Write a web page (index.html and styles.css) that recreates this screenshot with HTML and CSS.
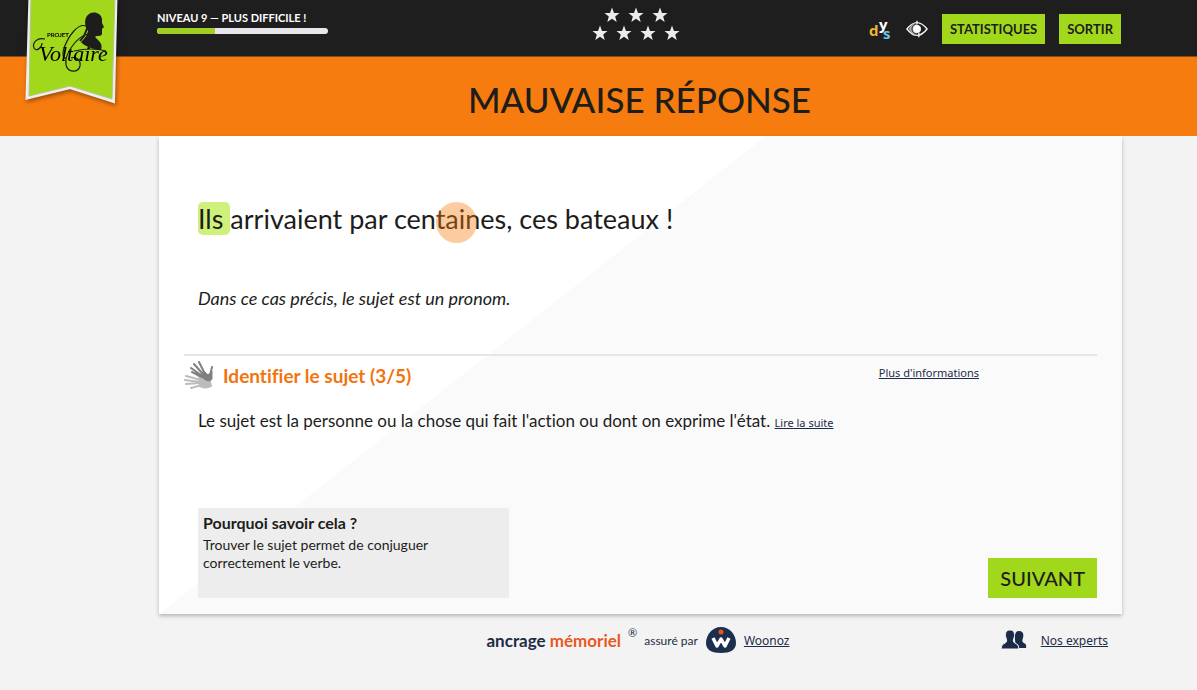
FILE: index.html
```html
<!DOCTYPE html>
<html lang="fr">
<head>
  <meta charset="UTF-8" />
  <meta name="viewport" content="width=device-width, initial-scale=1.0"/>
  <title>Projet Voltaire</title>
  <link rel="stylesheet" href="styles.css">
</head>
<body>
  <header class="top-bar">
    <a class="logo" href="#" aria-label="Projet Voltaire">
      <svg width="100" height="112" viewBox="0 0 100 112">
        <path class="ribbon-edge" d="M10 -4 L96 -4 L93.500 101.500 L50 87.500 L7 98 Z" />
        <path class="ribbon" d="M11 -4 L95 -4 L92 99 L50 86 L9 96 Z" />
        <path d="M69 14 C74 11 81 13 82 19 L82 23 L84 27 L82 29 L82 34 C81 37 77 35 75 37 L79 41 C82 44 82 47 81 50 C74 50 64 46 61 42 C64 39 67 36 68 31 C64 26 64 17 69 14 Z" fill="#1d1d1b" />
        <path d="M68 26 L64 36 L60 41 M70 32 L65 43" fill="none" stroke="#1d1d1b" stroke-width="2" />
        <g fill="none" stroke="#1d1d1b" stroke-width="1.200">
          <path d="M25 39 C17 37 12 43 14 48 C16 52 22 48 22 43" />
          <path d="M66 26 C58 23 49 35 44 48 C42 54 43 59 46 58" />
          <path d="M68 34 C58 36 44 53 46 65 C48 73 58 73 60 66 C61 60 56 56 51 58" />
          <path d="M54 51 Q72 47 86 51" />
        </g>
        <text class="logo-small" x="27" y="37">PROJET</text>
        <text class="logo-name" x="19" y="61">Voltaire</text>
      </svg>
    </a>

    <div class="level">
      <label for="progress">NIVEAU 9 — PLUS DIFFICILE !</label>
      <progress id="progress" value="34" max="100"></progress>
    </div>

    <div class="stars">
      <svg width="0" height="0" class="defs">
        <symbol id="star" viewBox="0 0 16 16">
          <path d="M8 0.500 L10 5.900 L15.500 6.100 L11.200 9.500 L12.700 15 L8 11.800 L3.300 15 L4.800 9.500 L0.500 6.100 L6 5.900 Z" fill="#ececec" />
        </symbol>
      </svg>
      <div class="star-row">
        <svg><use href="#star" /></svg>
        <svg><use href="#star" /></svg>
        <svg><use href="#star" /></svg>
      </div>
      <div class="star-row">
        <svg><use href="#star" /></svg>
        <svg><use href="#star" /></svg>
        <svg><use href="#star" /></svg>
        <svg><use href="#star" /></svg>
      </div>
    </div>

    <nav class="actions">
      <button type="button" class="icon-btn" aria-label="Mode dys">
        <svg width="24" height="24" viewBox="0 0 24 24" class="dys">
          <text x="1" y="19" fill="#f5b52a">d</text>
          <text x="11" y="13" fill="#fff">y</text>
          <text x="15" y="22" fill="#6cc6ea">s</text>
        </svg>
      </button>
      <button type="button" class="icon-btn" aria-label="Contraste">
        <svg width="22" height="20" viewBox="0 0 24 20" fill="none" stroke="#f2f2f2">
          <path d="M1 10 Q12 -4 23 10 Q12 24 1 10 Z" stroke-width="1.500" />
          <path d="M3 10 Q7 3 12 3 L12 17 Q7 17 3 10 Z" fill="#aaa" stroke="none" />
          <circle cx="12" cy="10" r="5.500" stroke="#1e1e1e" />
          <circle cx="12" cy="10" r="4" fill="#fff" />
          <path d="M12 1 V5 M14 14 V19" stroke-width="1.500" />
        </svg>
      </button>
      <button type="button" class="btn">STATISTIQUES</button>
      <button type="button" class="btn">SORTIR</button>
    </nav>
  </header>

  <div class="result-banner">
    <h1>MAUVAISE RÉPONSE</h1>
  </div>

  <main class="card">
    <p class="sentence"><mark>Ils </mark>arrivaient par cen<span class="click-spot">tain</span>es, ces bateaux !</p>
    <p class="hint">Dans ce cas précis, le sujet est un pronom.</p>

    <section class="rule">
      <div class="rule-header">
        <svg width="30" height="30" viewBox="0 0 30 30" fill="none" stroke-linecap="round">
          <g stroke="#bcbcbc" stroke-width="2">
            <path d="M17 19 L2 15 M16 21 L1 19 M16 22 L2 23 M18 24 L7 27 M19 19 L12 13" />
            <path d="M16 18 Q22 17 26 21 L27 25 Q22 28 16 25 Z" fill="#bcbcbc" />
          </g>
          <g stroke="#808080" stroke-width="2">
            <path d="M17 14 L7 7 M18 12 L10 3 M20 11 L15 1 M18 16 L8 11 M26 15 L28 6" />
            <path d="M17 14 L20 10 L24 14 L28 10 L28 18 Q26 22 20 18 Z" fill="#808080" stroke-width="1" />
          </g>
        </svg>
        <h2>Identifier le sujet (3/5)</h2>
        <a href="#" class="more-link">Plus d'informations</a>
      </div>
      <p class="rule-text">Le sujet est la personne ou la chose qui fait l'action ou dont on exprime l'état. <a href="#">Lire la suite</a></p>
    </section>

    <div class="card-bottom">
      <aside class="why">
        <h3>Pourquoi savoir cela ?</h3>
        <p>Trouver le sujet permet de conjuguer correctement le verbe.</p>
      </aside>
      <button type="button" class="btn btn-next">SUIVANT</button>
    </div>
  </main>

  <footer class="footer">
    <div class="brand">
      <strong>ancrage <span>mémoriel</span></strong>
      <sup>®</sup>
      <small>assuré par</small>
      <svg width="32" height="28" viewBox="0 0 32 28">
        <path d="M16 1 C25 1 31 9 31 17 C31 24 25 27 16 27 C7 27 1 24 1 17 C1 9 7 1 16 1 Z" fill="#1c2f4d" />
        <circle cx="16" cy="6" r="2.500" fill="#e8531f" />
        <path d="M8 12 L12 20 L16 13 L20 20 L24 12" fill="none" stroke="#fff" stroke-width="3.500" stroke-linejoin="round" />
      </svg>
      <a href="#">Woonoz</a>
    </div>
    <div class="experts">
      <svg width="26" height="20" viewBox="0 0 26 20" fill="#1c2b48">
        <path d="M18 1 C22 1 23 4 22 8 C21 11 21 12 23 13 Q26 14 25 18 L15 18 L14 10 Q13 1 18 1 Z" />
        <path d="M9 0 C14 0 14 5 13 8 C12 11 12 12 14 13 Q18 14 18 19 L0 19 Q0 14 4 13 C6 12 6 11 5 8 C4 5 4 0 9 0 Z" stroke="#f3f3f3" stroke-width="1" />
      </svg>
      <a href="#">Nos experts</a>
    </div>
  </footer>
</body>
</html>
```
FILE: styles.css
```css
* {
  box-sizing: border-box;
  margin: 0;
  padding: 0;
}

body {
  background-color: #f3f3f3;
  font-family: "Century Gothic", Lato, sans-serif;
  font-variant-ligatures: none;
  color: #1d1d1b;
}

a {
  color: #1c2b48;
  font-family: "Noto Sans", sans-serif;
  font-size: 11px;
}

.top-bar {
  position: relative;
  display: grid;
  grid-template-columns: 1fr auto 1fr;
  height: 57px;
  padding: 0 76px 0 157px;
  background-color: #1e1e1e;
  border-bottom: 1px solid #8a4a15;
}

.logo {
  position: absolute;
  top: 0;
  left: 20px;
  z-index: 1;
}

.logo svg {
  display: block;
  filter: drop-shadow(1px 2px 2px rgba(0,0,0,0.4));
}

.ribbon-edge {
  fill: #eee;
  stroke: #eee;
  stroke-width: 3px;
}

.ribbon {
  fill: #a2d81c;
  stroke: #b3c58c;
  stroke-width: 1px;
}

.logo-small {
  font: bold 6px Lato, sans-serif;
}

.logo-name {
  font: italic 22px "Liberation Serif", serif;
}

.level {
  display: flex;
  flex-direction: column;
  gap: 2px;
  padding-top: 10px;
}

.level label {
  color: #fff;
  font-size: 11px;
  font-weight: bold;
  line-height: 16px;
}

.level progress {
  appearance: none;
  display: block;
  width: 171px;
  height: 6px;
  border: none;
  border-radius: 3px;
  overflow: hidden;
}

.level progress::-webkit-progress-bar {
  background-color: #e8e6ea;
}

.level progress::-webkit-progress-value {
  background-color: #9fd021;
}

.stars {
  margin-right: 7px;
  padding-top: 7px;
}

.defs {
  position: absolute;
}

.star-row {
  display: flex;
  justify-content: center;
  gap: 8px;
  height: 18px;
}

.star-row svg {
  width: 16px;
  height: 16px;
}

.actions {
  display: flex;
  justify-content: flex-end;
  align-items: center;
  gap: 14px;
  padding-top: 2px;
}

.icon-btn {
  display: flex;
  background: none;
  border: none;
  cursor: pointer;
}

.dys {
  overflow: visible;
  font: bold 15px "Open Sans", sans-serif;
}

.btn {
  height: 30px;
  padding: 0 8px;
  border: none;
  background-color: #a2d81c;
  color: #1d1d1b;
  font-family: inherit;
  font-size: 13px;
  font-weight: bold;
  cursor: pointer;
}

.result-banner {
  padding: 20px 76px 15px 158px;
  background-color: #f77c0f;
  text-align: center;
}

.result-banner h1 {
  font-size: 35px;
  font-weight: 500;
  line-height: 44px;
}

.card {
  margin: 0 75px 0 159px;
  padding: 67px 25px 16px;
  background: linear-gradient(to bottom right, #fff 50%, #fafafa 50%) 0 0 / 63% 100% no-repeat #fafafa;
  box-shadow: 0 2px 4px rgba(0,0,0,0.25);
}

.sentence {
  margin-left: 14px;
  font-size: 27px;
  line-height: 32px;
}

.sentence mark {
  border-radius: 5px;
  background-color: #d0f07c;
  color: inherit;
}

.click-spot {
  position: relative;
}

.click-spot::after {
  content: "";
  position: absolute;
  top: 0;
  left: 0;
  width: 41px;
  height: 41px;
  border-radius: 50%;
  background-color: rgba(247,124,15,0.4);
}

.hint {
  margin: 53px 0 46px 14px;
  font-size: 18px;
  font-style: italic;
  line-height: 20px;
}

.rule {
  border-top: 2px solid #e6e6e6;
}

.rule-header {
  display: flex;
  align-items: center;
  gap: 9px;
  padding-top: 5px;
}

.rule-header h2 {
  color: #f2740f;
  font-size: 19px;
  line-height: 24px;
}

.more-link {
  align-self: flex-start;
  margin: 4px 118px 0 auto;
}

.rule-text {
  margin: 20px 0 75px 14px;
  font-size: 17px;
  line-height: 20px;
}

.card-bottom {
  display: flex;
  justify-content: space-between;
  align-items: flex-end;
}

.why {
  width: 311px;
  min-height: 90px;
  margin-left: 14px;
  padding: 5px;
  background-color: #ededed;
}

.why h3 {
  font-size: 16px;
  line-height: 20px;
}

.why p {
  max-width: 260px;
  padding-top: 3px;
  font-size: 14px;
  line-height: 18px;
}

.btn-next {
  height: 40px;
  padding: 0 12px;
  font-size: 20px;
  font-weight: 500;
}

.footer {
  display: grid;
  grid-template-columns: 1fr auto 1fr;
  padding: 12px 89px 0 168px;
}

.footer a {
  font-size: 12px;
}

.brand {
  grid-column: 2;
  display: flex;
  align-items: center;
  gap: 7px;
  color: #1c2b48;
}

.brand strong {
  font-size: 17px;
}

.brand strong span {
  color: #e8591f;
}

.brand sup {
  align-self: flex-start;
  font-size: 11px;
}

.brand small {
  font-size: 12px;
}

.experts {
  display: flex;
  justify-content: flex-end;
  align-items: center;
  gap: 14px;
}
```
